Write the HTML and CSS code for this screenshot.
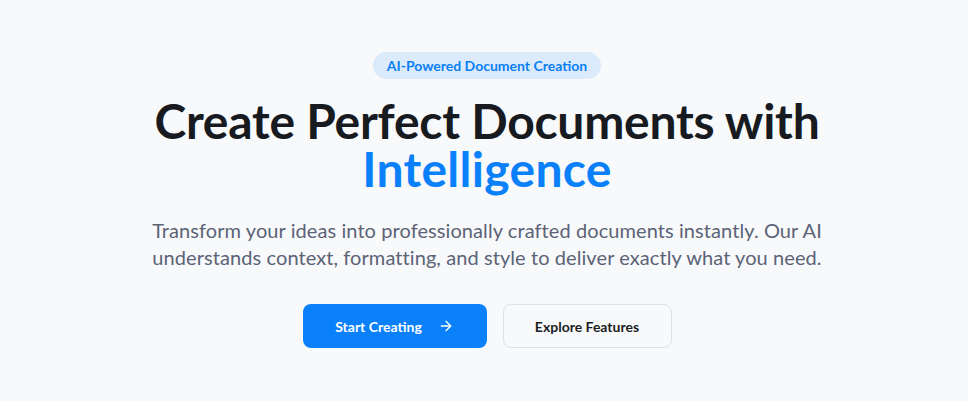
FILE: index.html
```html
<!DOCTYPE html>
<html lang="en">
<head>
<meta charset="utf-8">
<title>AI Document Creation</title>
<link rel="stylesheet" href="styles.css">
</head>
<body>
<section class="hero">
  <span class="badge">AI-Powered Document Creation</span>
  <h1 class="title">Create Perfect Documents with<br><span class="accent">Intelligence</span></h1>
  <p class="lead">Transform your ideas into professionally crafted documents instantly. Our AI understands context, formatting, and style to deliver exactly what you need.</p>
  <div class="actions">
    <a class="btn btn-primary" href="#">Start Creating
      <svg class="arrow" width="16" height="16" viewBox="0 0 24 24" fill="none" stroke="currentColor" stroke-width="2" stroke-linecap="round" stroke-linejoin="round"><path d="M5 12h14"/><path d="M12 5l7 7-7 7"/></svg>
    </a>
    <a class="btn btn-secondary" href="#">Explore Features</a>
  </div>
</section>
</body>
</html>
```
FILE: styles.css
```css
html, body {
  margin: 0;
  padding: 0;
}
body {
  background: #f8f9fb;
  font-family: "Lato", "Noto Sans", sans-serif;
  color: #15181d;
  height: 401px;
  overflow: hidden;
}
.hero {
  display: flex;
  flex-direction: column;
  align-items: center;
  text-align: center;
  padding: 52px 0 0 6px;
}
.badge {
  display: inline-block;
  background: #dcebfb;
  color: #0a7ef5;
  font-size: 14px;
  font-weight: 700;
  line-height: 27px;
  padding: 0 14px;
  border-radius: 14px;
}
.title {
  margin: 18px 0 0;
  font-size: 48px;
  font-weight: 700;
  line-height: 48px;
  letter-spacing: -0.25px;
  color: #171a1f;
}
.accent {
  color: #0a80fa;
  letter-spacing: 0.3px;
}
.lead {
  margin: 24px 0 0;
  max-width: 690px;
  font-size: 20px;
  line-height: 27px;
  letter-spacing: 0.08px;
  color: #5b6377;
}
.actions {
  display: flex;
  gap: 16px;
  margin-top: 33px;
}
.btn {
  display: flex;
  align-items: center;
  justify-content: center;
  height: 44px;
  box-sizing: border-box;
  border-radius: 8px;
  font-size: 14px;
  font-weight: 700;
  text-decoration: none;
}
.btn-primary {
  width: 184px;
  background: #0a80fa;
  color: #fff;
  gap: 16px;
}
.btn-secondary {
  width: 169px;
  background: #f8f9fb;
  color: #1b1e24;
  border: 1px solid #dfe2e7;
}
.arrow {
  display: block;
}
```
